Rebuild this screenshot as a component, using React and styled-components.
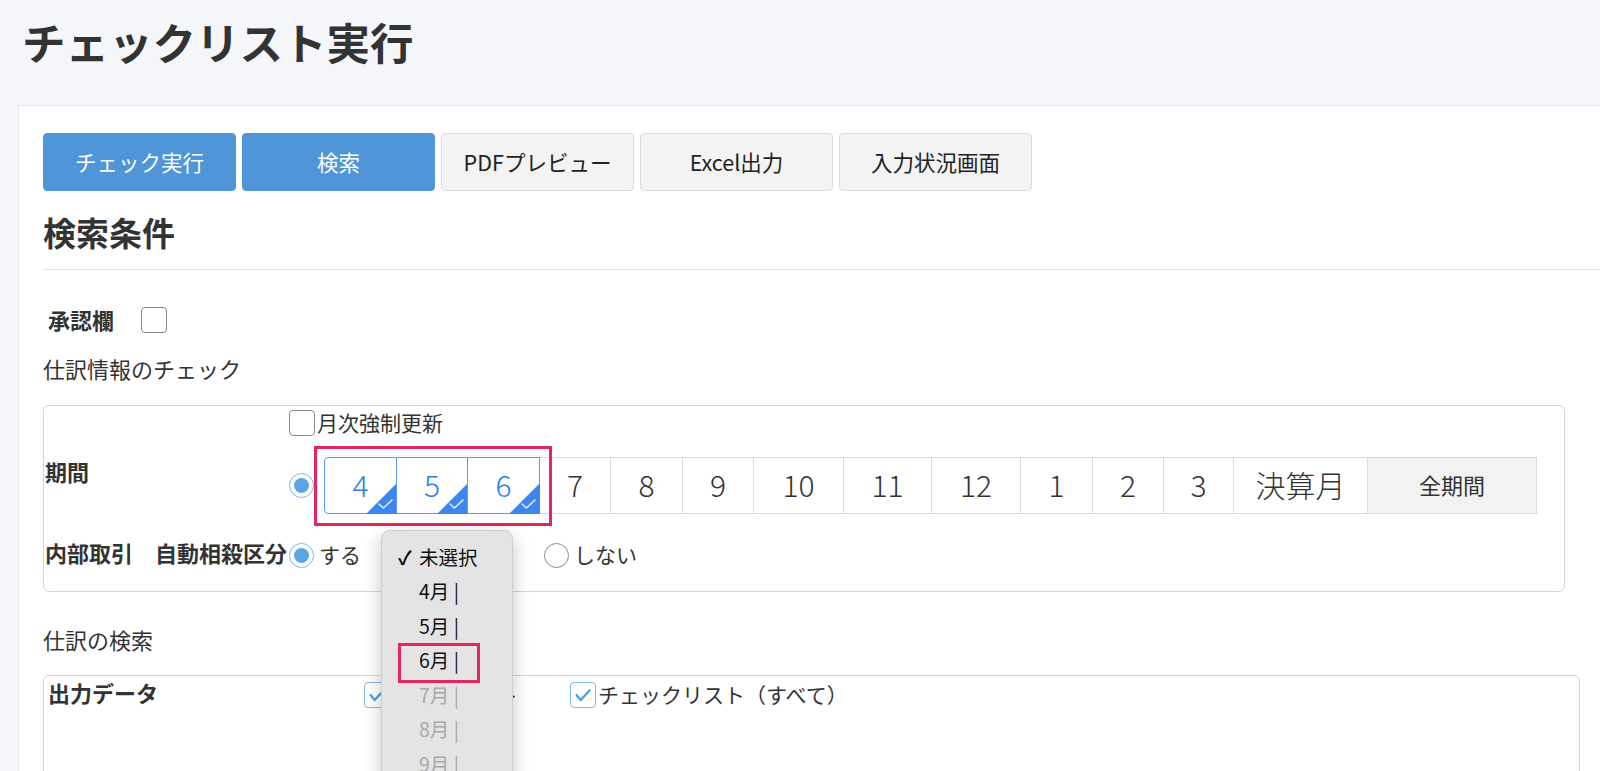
import React from 'react';
import styled, { createGlobalStyle } from 'styled-components';

const GlobalStyle = createGlobalStyle`
  html, body {
    margin: 0;
    padding: 0;
  }
  body {
    background: #f5f6fa;
    font-family: "Noto Sans CJK JP", "Noto Sans", sans-serif;
    color: #333;
    overflow: hidden;
  }
`;

const MONTHS = [
  { label: '4', w: 73, on: true },
  { label: '5', w: 72, on: true },
  { label: '6', w: 73, on: true },
  { label: '7', w: 72 },
  { label: '8', w: 73 },
  { label: '9', w: 72 },
  { label: '10', w: 91 },
  { label: '11', w: 89 },
  { label: '12', w: 90 },
  { label: '1', w: 73 },
  { label: '2', w: 72 },
  { label: '3', w: 71 },
  { label: '決算月', w: 135 },
  { label: '全期間', w: 170, muted: true },
];

const MENU_ITEMS = [
  { label: '未選択', checked: true },
  { label: '4月 |' },
  { label: '5月 |' },
  { label: '6月 |', marked: true },
  { label: '7月 |', disabled: true },
  { label: '8月 |', disabled: true },
  { label: '9月 |', disabled: true },
];

const Page = styled.div`
  position: relative;
  width: 1600px;
  height: 771px;
  overflow: hidden;
  background: #f5f6fa;
`;

const Title = styled.h1`
  margin: 0;
  box-sizing: border-box;
  height: 105px;
  padding: 20px 0 0 22px;
  font-size: 43.5px;
  line-height: 44px;
  font-weight: 700;
  color: #333;
`;

const Panel = styled.div`
  margin-left: 18px;
  min-height: 700px;
  background: #fff;
  border-top: 1px solid #e6e8ec;
  border-left: 1px solid #e6e8ec;
  padding: 27px 0 0 24px;
`;

const Toolbar = styled.div`
  display: flex;
  gap: 6px;
`;

const ActionButton = styled.button`
  width: 193px;
  height: 58px;
  box-sizing: border-box;
  padding: 0 0 2px;
  border-radius: 4px;
  border: 1px solid ${p => (p.$primary ? '#4f95d7' : '#dcdcdc')};
  background: ${p => (p.$primary ? '#4f95d7' : '#f3f3f3')};
  color: ${p => (p.$primary ? '#fff' : '#222')};
  font-family: inherit;
  font-size: 21.5px;
`;

const SectionTitle = styled.h2`
  margin: 24px 0 0;
  font-size: 33px;
  line-height: 34px;
  font-weight: 700;
  color: #333;
`;

const Divider = styled.div`
  margin-top: 20px;
  border-top: 1px solid #e3e3e3;
`;

const ApproveRow = styled.div`
  display: flex;
  align-items: center;
  height: 50px;
  margin-top: 25px;
  padding-left: 5px;
`;

const BoldLabel = styled.span`
  font-size: 22px;
  line-height: 30px;
  padding-bottom: 3px;
  font-weight: 700;
  color: #333;
  white-space: pre;
`;

const Box = styled.span`
  display: inline-flex;
  align-items: center;
  justify-content: center;
  flex: none;
  box-sizing: border-box;
  width: 26px;
  height: 26px;
  border-radius: 4px;
  background: #fff;
  border: 1px solid ${p => (p.$checked ? '#86b8e8' : '#8a8a8a')};
  margin-left: ${p => p.$offset || 0}px;
`;

const GroupCaption = styled.div`
  margin-top: ${p => p.$top}px;
  font-size: 22px;
  line-height: 30px;
  color: #333;
`;

const FieldBox = styled.div`
  box-sizing: border-box;
  width: ${p => p.$width}px;
  margin-top: ${p => p.$top}px;
  border: 1px solid #d4d4d4;
  border-radius: 6px;
  display: grid;
  grid-template-columns: ${p => p.$labelWidth}px 1fr;
  row-gap: ${p => p.$gap}px;
  padding: ${p => p.$pad};
  min-height: ${p => p.$minHeight || 0}px;
`;

const LabelCell = styled.div`
  padding-left: ${p => p.$indent || 1}px;
  margin-top: ${p => p.$top || 0}px;
`;

const ContentCell = styled.div`
  position: relative;
  display: flex;
  flex-direction: column;
`;

const OptionLine = styled.div`
  display: flex;
  align-items: center;
  height: ${p => p.$h || 30}px;
  margin-top: ${p => p.$top || 0}px;
  gap: ${p => p.$gap || 0}px;
`;

const OptionText = styled.span`
  font-size: 21px;
  line-height: 30px;
  padding-bottom: 3px;
  color: #333;
  white-space: nowrap;
`;

const Option = styled.label`
  display: flex;
  align-items: center;
  gap: ${p => p.$gap || 0}px;
  width: ${p => (p.$width ? `${p.$width}px` : 'auto')};
  margin-left: ${p => p.$offset || 0}px;
`;

const Radio = styled.span`
  display: inline-flex;
  align-items: center;
  justify-content: center;
  flex: none;
  box-sizing: border-box;
  width: 25px;
  height: 25px;
  border-radius: 50%;
  background: #fff;
  border: 1px solid ${p => (p.$on ? '#7db5ea' : '#8a8a8a')};
  &::after {
    content: '';
    width: 15px;
    height: 15px;
    border-radius: 50%;
    background: ${p => (p.$on ? '#5aa6e4' : 'transparent')};
  }
`;

const MonthStrip = styled.div`
  position: relative;
  display: flex;
  margin-left: 10px;
`;

const MonthCell = styled.div`
  position: relative;
  box-sizing: border-box;
  width: ${p => p.$w}px;
  height: 57px;
  margin-left: -1px;
  padding-bottom: 3px;
  display: flex;
  align-items: center;
  justify-content: center;
  border: 1px solid ${p => (p.$on ? '#5b9cf2' : '#dcdcdc')};
  background: ${p => (p.$muted ? '#f2f2f2' : '#fff')};
  color: ${p => (p.$on ? '#2b7de9' : '#333')};
  font-size: ${p => (p.$muted ? 22 : 30)}px;
  font-weight: ${p => (p.$muted ? 400 : 300)};
  z-index: ${p => (p.$on ? 1 : 0)};
  &:first-child {
    margin-left: 0;
    border-radius: 4px 0 0 4px;
  }
  &:last-child {
    border-radius: 0 4px 4px 0;
  }
`;

const Corner = styled.svg`
  position: absolute;
  right: -1px;
  bottom: -1px;
`;

const Highlight = styled.div`
  position: absolute;
  box-sizing: border-box;
  left: ${p => p.$x}px;
  top: ${p => p.$y}px;
  width: ${p => p.$w}px;
  height: ${p => p.$h}px;
  border: 3px solid #e5255b;
  z-index: 2;
  pointer-events: none;
`;

const Menu = styled.ul`
  position: absolute;
  left: 381px;
  top: 530px;
  box-sizing: border-box;
  width: 132px;
  height: 280px;
  margin: 0;
  padding: 8px 0 0;
  list-style: none;
  background: #e4e4e4;
  border: 1px solid #cfcfcf;
  border-radius: 9px;
  box-shadow: 0 6px 18px rgba(0, 0, 0, 0.22);
  z-index: 5;
`;

const MenuItem = styled.li`
  position: relative;
  display: flex;
  align-items: center;
  height: 34.5px;
  padding-left: 16px;
  font-size: 19.5px;
  color: ${p => (p.$disabled ? '#a9a9a9' : '#111')};
`;

const CheckSlot = styled.span`
  width: 21px;
  font-size: 19px;
  font-weight: 700;
`;

const CheckMark = () => (
  <svg width="26" height="26" viewBox="0 0 26 26">
    <polyline points="6,13 10.5,18.5 20,8" fill="none" stroke="#4a9de3" strokeWidth="2.4" strokeLinecap="round" strokeLinejoin="round" />
  </svg>
);

const SelectedCorner = () => (
  <Corner width="31" height="31" viewBox="0 0 31 31">
    <polygon points="31,0 31,31 0,31" fill="#3d86f0" />
    <polyline points="13,21 17.5,25 26,17" fill="none" stroke="#e3edfc" strokeWidth="1.6" strokeLinecap="round" strokeLinejoin="round" />
  </Corner>
);

const App = () => (
  <Page>
    <GlobalStyle />
    <Title>チェックリスト実行</Title>
    <Panel>
      <Toolbar>
        <ActionButton $primary>チェック実行</ActionButton>
        <ActionButton $primary>検索</ActionButton>
        <ActionButton>PDFプレビュー</ActionButton>
        <ActionButton>Excel出力</ActionButton>
        <ActionButton>入力状況画面</ActionButton>
      </Toolbar>

      <SectionTitle>検索条件</SectionTitle>
      <Divider />

      <ApproveRow>
        <BoldLabel>承認欄</BoldLabel>
        <Box $offset={27} />
      </ApproveRow>

      <GroupCaption $top={8}>仕訳情報のチェック</GroupCaption>
      <FieldBox $width={1522} $top={22} $labelWidth={245} $gap={26} $pad="4px 0 21px 0">
        <LabelCell $top={46}>
          <BoldLabel>期間</BoldLabel>
        </LabelCell>
        <ContentCell>
          <OptionLine $h={26} $gap={2}>
            <Box />
            <OptionText>月次強制更新</OptionText>
          </OptionLine>
          <OptionLine $h={57} $top={21}>
            <Radio $on />
            <MonthStrip>
              {MONTHS.map(m => (
                <MonthCell key={m.label} $w={m.w} $on={m.on} $muted={m.muted}>
                  {m.label}
                  {m.on && <SelectedCorner />}
                </MonthCell>
              ))}
              <Highlight $x={-10} $y={-11} $w={238} $h={80} />
            </MonthStrip>
          </OptionLine>
        </ContentCell>

        <LabelCell $top={-3}>
          <BoldLabel>内部取引　自動相殺区分</BoldLabel>
        </LabelCell>
        <ContentCell>
          <OptionLine>
            <Option $gap={5}>
              <Radio $on />
              <OptionText>する</OptionText>
            </Option>
            <Option $gap={5} $offset={183}>
              <Radio />
              <OptionText>しない</OptionText>
            </Option>
          </OptionLine>
        </ContentCell>
      </FieldBox>

      <GroupCaption $top={32}>仕訳の検索</GroupCaption>
      <FieldBox $width={1537} $top={21} $labelWidth={320} $gap={20} $pad="4px 0 0 0" $minHeight={200}>
        <LabelCell $indent={4} $top={-3}>
          <BoldLabel>出力データ</BoldLabel>
        </LabelCell>
        <ContentCell>
          <OptionLine>
            <Option $gap={2} $width={206}>
              <Box $checked><CheckMark /></Box>
              <OptionText>エラーリスト</OptionText>
            </Option>
            <Option $gap={2}>
              <Box $checked><CheckMark /></Box>
              <OptionText>チェックリスト（すべて）</OptionText>
            </Option>
          </OptionLine>
        </ContentCell>
        <LabelCell />
        <ContentCell>
          <OptionLine>
            <Option $gap={2}>
              <Box $checked><CheckMark /></Box>
              <OptionText>仕訳一覧</OptionText>
            </Option>
          </OptionLine>
        </ContentCell>
      </FieldBox>
    </Panel>

    <Menu>
      {MENU_ITEMS.map(item => (
        <MenuItem key={item.label} $disabled={item.disabled}>
          <CheckSlot>{item.checked ? '✓' : ''}</CheckSlot>
          {item.label}
          {item.marked && <Highlight $x={16} $y={0} $w={82} $h={40} />}
        </MenuItem>
      ))}
    </Menu>
  </Page>
);

export default App;
